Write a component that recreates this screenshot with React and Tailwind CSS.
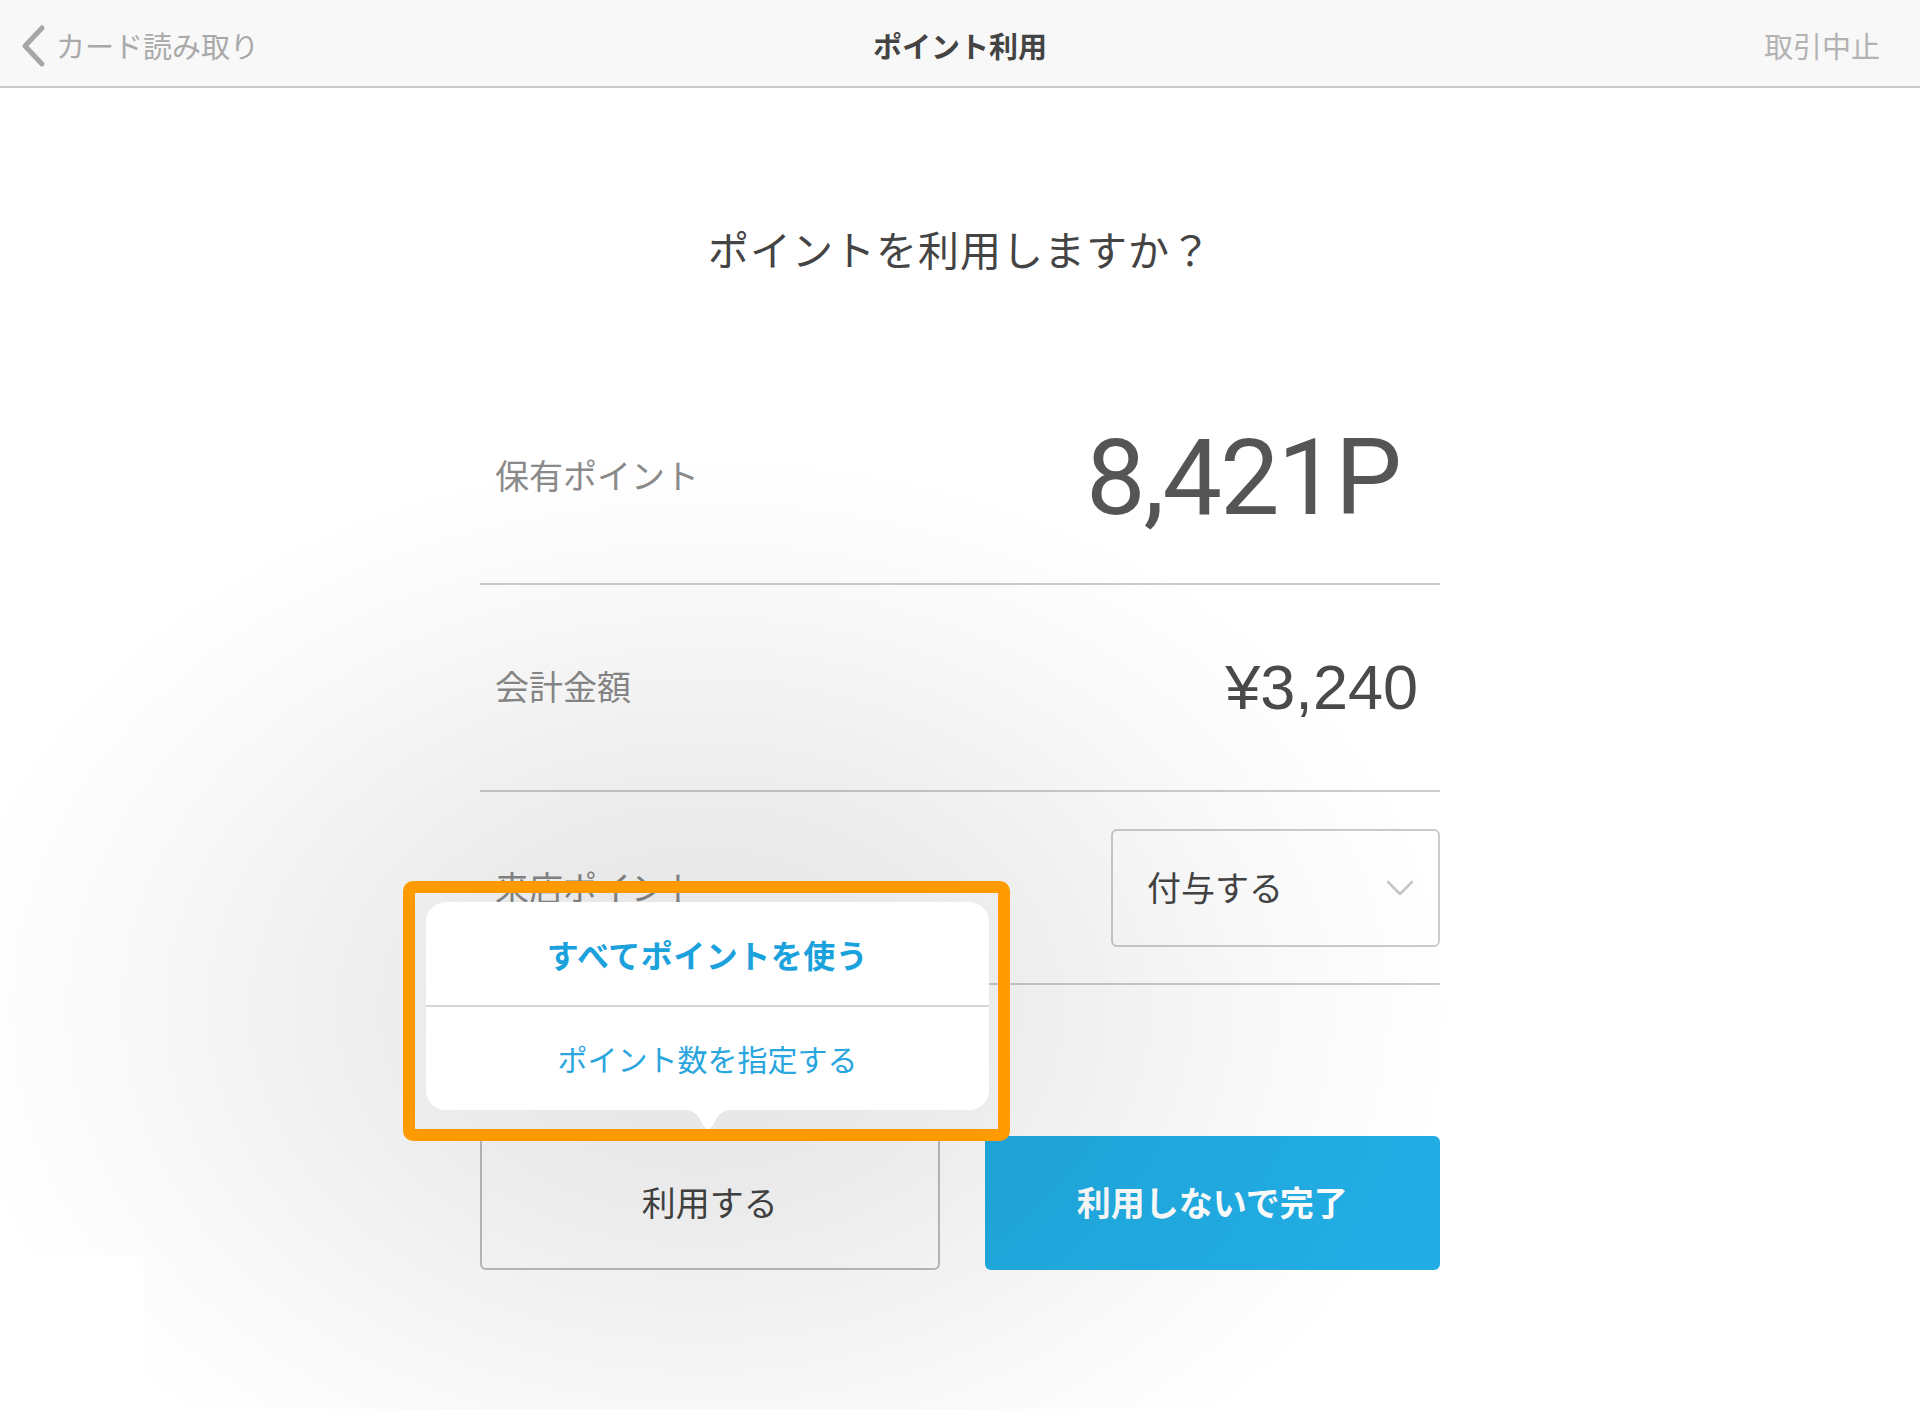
import React from "react";

// back chevron in the nav bar
const BackChevron = () => (
    <svg width="30" height="44" viewBox="0 0 30 44" fill="none">
        <polyline points="24,4 7,22 24,40" stroke="#a6a6a6" strokeWidth="5" strokeLinecap="round" strokeLinejoin="round" />
    </svg>
);

// small chevron inside the select box
const DownChevron = () => (
    <svg width="28" height="16" viewBox="0 0 28 16" fill="none">
        <polyline points="2,2 14,14 26,2" stroke="#c6c6c6" strokeWidth="2.5" strokeLinecap="round" strokeLinejoin="round" />
    </svg>
);

// the pointer under the popover
const PopoverArrow = () => (
    <svg width="62" height="26" viewBox="0 0 62 26">
        <path d="M0 0 C14 0 20 3 25 14 Q31 26 37 14 C42 3 48 0 62 0 Z" fill="#ffffff" />
    </svg>
);

const App = () => {
    return (
        <div className="relative h-[1409px] w-full overflow-hidden bg-white font-['Noto_Sans_CJK_JP',sans-serif]">
            {/* Nav bar */}
            <header className="grid h-[88px] grid-cols-3 items-center border-b-2 border-[#c9c9c9] bg-[#f8f8f8] pt-[6px]">
                <div className="flex items-center gap-[8px] pl-[18px]">
                    <BackChevron />
                    <span className="text-[29px] text-[#a9a9a9]">カード読み取り</span>
                </div>
                <h1 className="text-center text-[29px] font-bold text-[#444]">ポイント利用</h1>
                <div className="pr-[40px] text-right text-[29px] text-[#b3b3b3]">取引中止</div>
            </header>

            <main className="mx-auto w-[960px]">
                <p className="mt-[132px] text-center text-[41px] leading-[56px] tracking-[1px] text-[#444]">ポイントを利用しますか？</p>

                <div className="mt-[97px] flex h-[212px] items-center justify-between border-b-2 border-[#cdcdcd] pl-[15px] pr-[40px]">
                    <span className="pb-[7px] text-[34px] text-[#8a8a8a]">保有ポイント</span>
                    <span className="font-['Roboto',sans-serif] text-[106px] leading-none tracking-[-2px] text-[#555]">8,421P</span>
                </div>

                <div className="flex h-[207px] items-center justify-between border-b-2 border-[#cdcdcd] pl-[15px] pr-[22px]">
                    <span className="pb-[5px] text-[34px] text-[#8a8a8a]">会計金額</span>
                    <span className="font-['Liberation_Sans',sans-serif] text-[63px] leading-none text-[#4a4a4a]">¥3,240</span>
                </div>

                <div className="flex h-[193px] items-center justify-between border-b-2 border-[#cdcdcd] pl-[15px]">
                    <span className="pb-[3px] text-[34px] text-[#8a8a8a]">来店ポイント</span>
                    <div className="flex h-[118px] w-[329px] items-center justify-between rounded-[6px] border-2 border-[#cbcbcb] bg-white pl-[34px] pr-[24px]">
                        <span className="pb-[3px] text-[34px] text-[#444]">付与する</span>
                        <DownChevron />
                    </div>
                </div>

                <div className="relative mt-[151px] flex h-[134px] gap-[45px]">
                    <button className="flex-1 rounded-[6px] border-2 border-[#bdbdbd] bg-white pb-[4px] text-[34px] text-[#444]">利用する</button>
                    <button className="flex-1 rounded-[6px] bg-[#21ade4] pb-[4px] text-[34px] font-bold text-white">利用しないで完了</button>

                    {/* popover anchored to 利用する */}
                    <div className="absolute left-[-54px] top-[-234px] z-20 w-[563px]">
                        <div className="flex flex-col rounded-[20px] bg-white">
                            <button className="h-[105px] border-b-2 border-[#d6d6d6] text-[32px] font-bold tracking-[0.5px] text-[#1ba1dc]">すべてポイントを使う</button>
                            <button className="h-[103px] text-[30px] text-[#2aa6df]">ポイント数を指定する</button>
                        </div>
                        <div className="-mt-px flex justify-center">
                            <PopoverArrow />
                        </div>
                    </div>

                    {/* orange highlight */}
                    <div className="absolute left-[-77px] top-[-255px] z-30 h-[260px] w-[607px] rounded-[10px] border-[12px] border-[#ff9a00]" />
                </div>
            </main>

            {/* popover shadow */}
            <div className="pointer-events-none absolute inset-0 z-10 bg-[radial-gradient(ellipse_760px_560px_at_700px_1010px,rgba(0,0,0,0.11),rgba(0,0,0,0.08)_35%,rgba(0,0,0,0.03)_70%,transparent)]" />
            <div className="absolute left-0 top-[1255px] z-10 h-[154px] w-[143px] bg-white" />
        </div>
    );
}

export default App
